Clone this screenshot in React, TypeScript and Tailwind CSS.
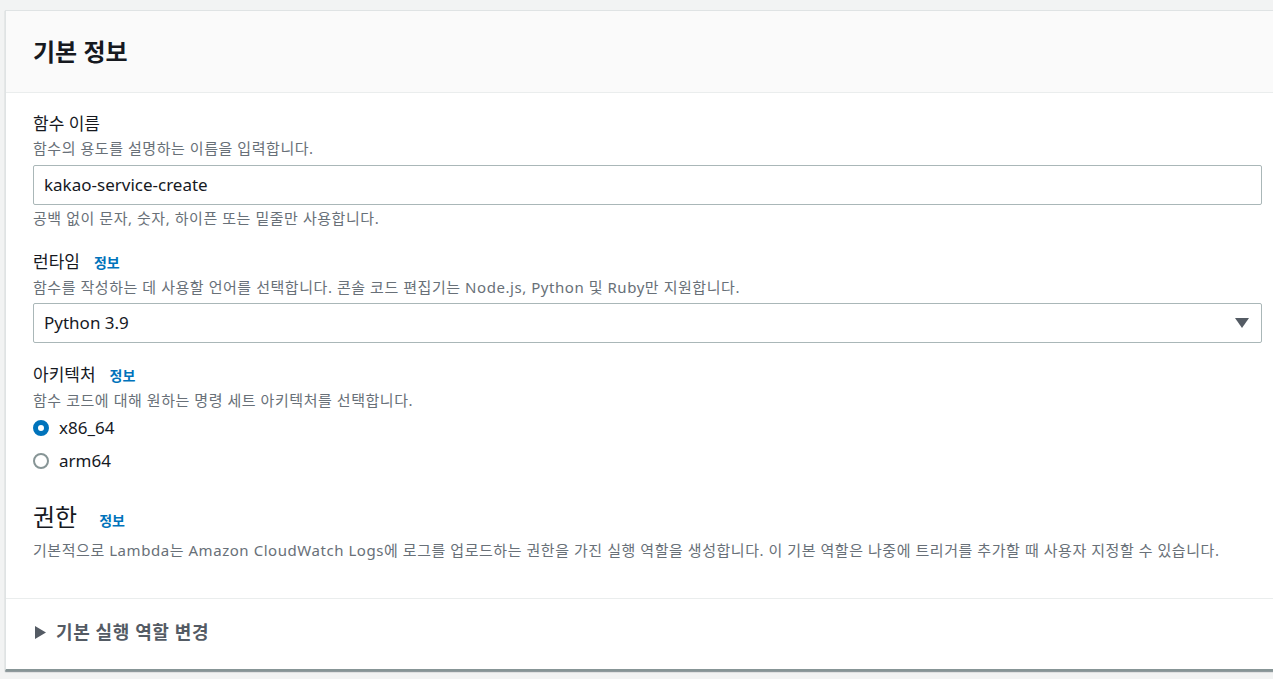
import React from "react";

const font = { fontFamily: '"Noto Sans", "Noto Sans CJK KR", sans-serif' };

function Info() {
  return <span className="ml-[14px] text-[14px] font-bold text-[#0073bb]">정보</span>;
}

const desc = "text-[15px] leading-[22px] tracking-[0.55px] text-[#687078]";

export default function App() {
  return (
    <div className="h-[679px] w-[1273px] overflow-hidden bg-[#f2f3f3] pl-[5px] pt-[10px]" style={font}>
      <div className="w-[1300px] border-l border-t border-[#dfe3e4] bg-white shadow-[0_1px_1px_0_rgba(0,28,36,0.3),1px_1px_1px_0_rgba(0,28,36,0.15)] border-b-2 border-b-[#879596]">
        <div className="flex h-[82px] items-center border-b border-[#eaeded] bg-[#fafafa] pl-[27px]">
          <h2 className="text-[24px] font-bold leading-none text-[#16191f]">기본 정보</h2>
        </div>
        <div className="w-[1256px] pl-[27px] pt-[18px] text-[#16191f]">
          <div className="text-[17px] leading-[26px]">함수 이름</div>
          <div className={desc}>함수의 용도를 설명하는 이름을 입력합니다.</div>
          <div className="mt-[6px] flex h-[40px] items-center rounded-[2px] border border-[#aab7b8] pl-[10px] text-[17px]">
            kakao-service-create
          </div>
          <div className={"mt-[2px] " + desc}>공백 없이 문자, 숫자, 하이픈 또는 밑줄만 사용합니다.</div>

          <div className="mt-[20px] flex items-baseline text-[17px] leading-[26px]">런타임<Info /></div>
          <div className={desc}>함수를 작성하는 데 사용할 언어를 선택합니다. 콘솔 코드 편집기는 Node.js, Python 및 Ruby만 지원합니다.</div>
          <div className="mt-[5px] flex h-[40px] items-center justify-between rounded-[2px] border border-[#aab7b8] pl-[10px] pr-[12px] text-[17px]">
            <span>Python 3.9</span>
            <svg width="14" height="10" viewBox="0 0 14 10"><path d="M0 0 H14 L7 10 Z" fill="#545b64" /></svg>
          </div>

          <div className="mt-[19px] flex items-baseline text-[17px] leading-[26px]">아키텍처<Info /></div>
          <div className={desc}>함수 코드에 대해 원하는 명령 세트 아키텍처를 선택합니다.</div>
          <div className="mt-[2px] flex h-[30px] items-center gap-[10px] text-[17px]">
            <span className="box-border h-[16px] w-[16px] rounded-full border-[5px] border-[#0073bb] bg-white" />
            <span>x86_64</span>
          </div>
          <div className="mt-[3px] flex h-[30px] items-center gap-[10px] text-[17px]">
            <span className="box-border h-[16px] w-[16px] rounded-full border-2 border-[#879596] bg-white" />
            <span>arm64</span>
          </div>

          <div className="mt-[26px] flex items-baseline">
            <span className="text-[24px] leading-[30px]">권한</span>
            <span className="ml-[22px] text-[14px] font-bold text-[#0073bb]">정보</span>
          </div>
          <div className={"mt-[7px] " + desc}>기본적으로 Lambda는 Amazon CloudWatch Logs에 로그를 업로드하는 권한을 가진 실행 역할을 생성합니다. 이 기본 역할은 나중에 트리거를 추가할 때 사용자 지정할 수 있습니다.</div>
        </div>
        <div className="mt-[37px] border-t border-[#eaeded]" />
        <div className="flex h-[70px] items-center pb-[4px] pl-[29px]">
          <svg width="11" height="13" viewBox="0 0 11 13"><path d="M0 0 L11 6.5 L0 13 Z" fill="#545b64" /></svg>
          <span className="ml-[10px] text-[18px] font-bold tracking-[0.6px] text-[#545b64]">기본 실행 역할 변경</span>
        </div>
      </div>
    </div>
  );
}
